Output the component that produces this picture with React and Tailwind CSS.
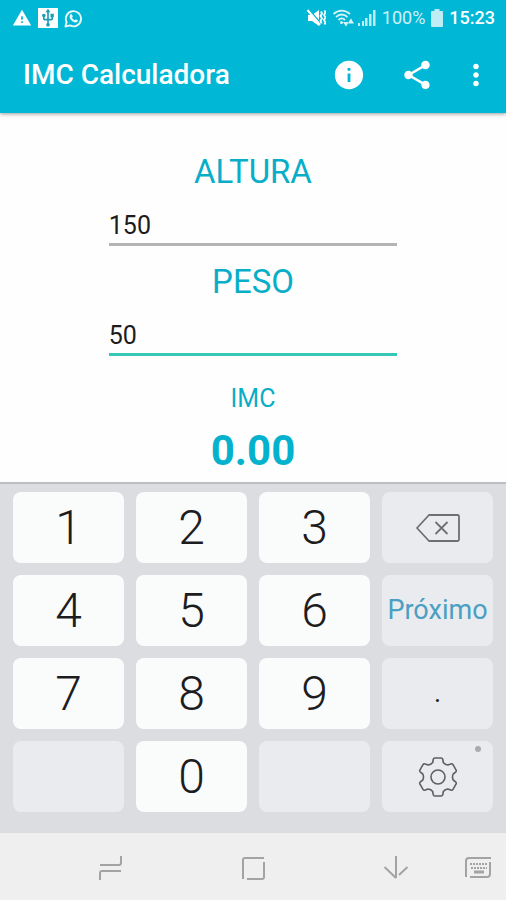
import { useState } from 'react';
import { MdInfo, MdMoreVert, MdShare, MdUsb, MdWarning } from 'react-icons/md';

function StatusBar() {
  return (
    <div className="flex h-9 items-center justify-between pl-3 pr-[11px]">
      <div className="flex items-center gap-1.5">
        <MdWarning className="size-5" />
        <span className="flex size-5 items-center justify-center bg-white text-[#1f9db5]">
          <MdUsb className="size-5" />
        </span>
        <svg className="size-[19px] opacity-90" viewBox="0 0 20 20" fill="none" stroke="currentColor" strokeWidth="2">
          <path d="M1.500 18.500l1.300-4.700A8 8 0 1 1 6.200 17.300z" strokeLinejoin="round" />
          <path d="M6.300 6.200q1-1.600 2.200-.2l.8 1.800-.9 1.300q1 1.900 2.800 2.700l1.200-1 2 1q.8 1-.6 2-2 1.200-5-1-4-3-2.500-6.600z" fill="currentColor" stroke="none" />
        </svg>
      </div>

      <div className="flex items-center gap-1.5 text-lg leading-6">
        <div className="flex items-center gap-1">
          {/* Muted, vibrating */}
          <svg className="size-5" viewBox="0 0 20 20" fill="none" stroke="currentColor">
            <path d="M2 7h4l7-5v16l-7-5H2z" fill="currentColor" stroke="none" />
            <path d="M3 1.500l12 14" stroke="#00b8d6" strokeWidth="1.500" />
            <path d="M1.500 2l12.500 15" strokeWidth="2" />
            <path d="M15 3.500l1 2-1.500 2.500 1.500 2.500-1.500 2.500 1 2.500M18.500 2.500l1 2-1.500 2.500 1.500 2.500-1.500 2.500 1.500 2.500-1 2" strokeWidth="1.800" />
          </svg>
          <svg className="h-5 w-6 opacity-85" viewBox="0 0 24 20" fill="none" stroke="currentColor" strokeWidth="1.800">
            <path d="M3.500 6c5-4.500 11.500-4.500 16.500 0M6 9c3.500-3 8-3 11.500 0M8.500 12c2-2 4.500-2 6.500 0" />
            <circle cx="11.500" cy="14.500" r="1.500" fill="currentColor" stroke="none" />
            <path d="M13 14h6l-3 4.500zM17.500 15.500h6.500l-3-5z" fill="currentColor" stroke="none" />
          </svg>
          <svg className="h-5 w-[18px] opacity-75" viewBox="0 0 18 20" fill="currentColor">
            <path d="M0 15h2v3H0zM4 13h2v5H4zM7 10h2.500v8H7zM11 6h2.500v12H11zM15 2h2.500v16H15z" />
          </svg>
        </div>
        <span className="opacity-80">100%</span>
        <svg className="h-5 w-3 opacity-75" viewBox="0 0 12 20" fill="currentColor">
          <path d="M3.500 1h5v2H11q1 0 1 1v14q0 1-1 1H1q-1 0-1-1V4q0-1 1-1h2.500z" />
        </svg>
        <span className="font-medium">15:23</span>
      </div>
    </div>
  );
}

function AppBar() {
  return (
    <div className="flex h-[77px] items-center pl-[23px] pr-[13px]">
      <h1 className="flex-1 text-[28px] font-medium leading-9">IMC Calculadora</h1>
      <button type="button" aria-label="Info" className="mr-[34px]">
        <MdInfo className="size-[34px]" />
      </button>
      <button type="button" aria-label="Compartilhar" className="mr-[25px]">
        <MdShare className="size-[34px]" />
      </button>
      <button type="button" aria-label="Menu">
        <MdMoreVert className="size-[34px]" />
      </button>
    </div>
  );
}

function Field({ id, label, value, onChange, active }) {
  return (
    <div className="flex w-full flex-col items-center gap-4">
      <label htmlFor={id} className="text-[33px] leading-10 text-[#08aec8]">{label}</label>
      <input
        id={id}
        type="text"
        inputMode="numeric"
        value={value}
        onChange={(e) => onChange(e.target.value)}
        className={`h-[38px] w-[57%] border-b-[3px] text-[25px] text-[#1c1c1c] outline-none ${active ? 'border-[#35c8b8]' : 'border-[#b4b4b4]'}`}
      />
    </div>
  );
}

function BackspaceIcon() {
  return (
    <svg className="h-7 w-11" viewBox="0 0 44 28" fill="none" stroke="#6d6f73" strokeWidth="1.800" strokeLinejoin="round">
      <path d="M13 1h28.500q1.500 0 1.500 1.500v23q0 1.500-1.500 1.500H13L1 14z" />
      <path d="M19.500 8l12 12M31.500 8l-12 12" />
    </svg>
  );
}

function GearIcon() {
  return (
    <svg className="size-10" viewBox="-20 -20 40 40" fill="none" stroke="#5d5f63" strokeWidth="1.600" strokeLinejoin="round">
      <path d="M-3-19H3Q4.500-19 4.800-17.500L5.300-14.500Q7-12.300 9.800-12L12.800-13.100Q14.200-13.700 15-12.300L18-7.200Q18.700-5.900 17.600-4.900L15.200-3Q13.800 0 15.200 3L17.600 4.900Q18.700 5.900 18 7.200L15 12.300Q14.200 13.700 12.800 13.100L9.800 12Q7 12.300 5.300 14.500L4.800 17.500Q4.500 19 3 19H-3Q-4.500 19-4.800 17.500L-5.300 14.500Q-7 12.300-9.800 12L-12.800 13.100Q-14.200 13.700-15 12.300L-18 7.200Q-18.700 5.900-17.600 4.900L-15.200 3Q-13.800 0-15.200-3L-17.600-4.900Q-18.700-5.900-18-7.200L-15-12.300Q-14.200-13.700-12.800-13.100L-9.800-12Q-7-12.300-5.300-14.500L-4.800-17.500Q-4.500-19-3-19z" />
      <circle r="7" />
    </svg>
  );
}

function Key({ children, muted, ...props }) {
  return (
    <button
      type="button"
      className={`relative flex h-[71px] items-center justify-center rounded-lg ${muted ? 'bg-[#e9ebef]' : 'bg-[#fafbfb]'}`}
      {...props}
    >
      {children}
    </button>
  );
}

function Digit({ n, onPress }) {
  return (
    <Key onClick={() => onPress(n)}>
      <span className="text-5xl font-light text-[#1d1d1f]">{n}</span>
    </Key>
  );
}

function Keyboard({ onPress, onDelete }) {
  return (
    <div className="grid grid-cols-4 gap-3 border-t-2 border-[#bcbec1] bg-[#dbdde1] px-[13px] pb-[21px] pt-2">
      {[1, 2, 3].map((n) => <Digit key={n} n={n} onPress={onPress} />)}
      <Key muted aria-label="Apagar" onClick={onDelete}><BackspaceIcon /></Key>
      {[4, 5, 6].map((n) => <Digit key={n} n={n} onPress={onPress} />)}
      <Key muted><span className="text-[27px] text-[#4a9fc2]">Próximo</span></Key>
      {[7, 8, 9].map((n) => <Digit key={n} n={n} onPress={onPress} />)}
      <Key muted onClick={() => onPress('.')}><span className="text-[27px] text-[#1d1d1f]">.</span></Key>
      <Key muted aria-label="Vazio" />
      <Digit n={0} onPress={onPress} />
      <Key muted aria-label="Vazio" />
      <Key muted aria-label="Configurações">
        <GearIcon />
        <span className="absolute right-3 top-[5px] size-1.5 rounded-full bg-[#a9abaf]" />
      </Key>
    </div>
  );
}

function NavBar() {
  return (
    <div className="flex h-[67px] items-center bg-[#efefef] pl-[19%] pr-3.5 text-[#a3a3a3]">
      <div className="flex flex-1 justify-between">
        <button type="button" aria-label="Recentes">
          <svg className="size-7" viewBox="0 0 28 28" fill="none" stroke="currentColor" strokeWidth="2">
            <path d="M4 12h19q2 0 2-2V3M25 18H6q-2 0-2 2v7" />
          </svg>
        </button>
        <button type="button" aria-label="Início">
          <svg className="size-7" viewBox="0 0 28 28" fill="none" stroke="currentColor" strokeWidth="2">
            <path d="M4 26V7q0-2 2-2h19M25 9v15q0 2-2 2H8" />
          </svg>
        </button>
        <button type="button" aria-label="Ocultar teclado">
          <svg className="size-7" viewBox="0 0 28 28" fill="none" stroke="currentColor" strokeWidth="2">
            <path d="M14 3v22M2.500 14L14 25M17 22l8.500-8" />
          </svg>
        </button>
      </div>
      <button type="button" aria-label="Trocar teclado" className="ml-[54px]">
        <svg className="size-7" viewBox="0 0 28 28" fill="none" stroke="currentColor" strokeWidth="2">
          <path d="M2 24V8q0-3 3-3h22M26 9v12q0 3-3 3H6" />
          <path d="M6 11h18M7 15h16" strokeDasharray="2 1" />
          <path d="M10 19h10" strokeWidth="3" />
        </svg>
      </button>
    </div>
  );
}

export default function App() {
  const [altura, setAltura] = useState('150');
  const [peso, setPeso] = useState('50');

  return (
    <div className="flex min-h-screen flex-col bg-white font-[Roboto,sans-serif]">
      <header className="relative bg-[#00b8d6] text-white shadow-[0_1px_4px_rgba(0,0,0,0.4)]">
        <StatusBar />
        <AppBar />
      </header>

      <main className="flex flex-1 flex-col items-center bg-[#fefefe] pt-[39px]">
        <div className="flex w-full flex-col gap-4">
          <Field id="altura" label="ALTURA" value={altura} onChange={setAltura} />
          <Field id="peso" label="PESO" value={peso} onChange={setPeso} active />
        </div>
        <div className="mt-[27px] text-[25px] leading-8 text-[#08aec8]">IMC</div>
        <output className="mt-3 text-[42px] font-bold leading-[48px] text-[#05b2cd]">0.00</output>
      </main>

      <Keyboard
        onPress={(n) => setPeso((v) => v + n)}
        onDelete={() => setPeso((v) => v.slice(0, -1))}
      />
      <NavBar />
    </div>
  );
}
